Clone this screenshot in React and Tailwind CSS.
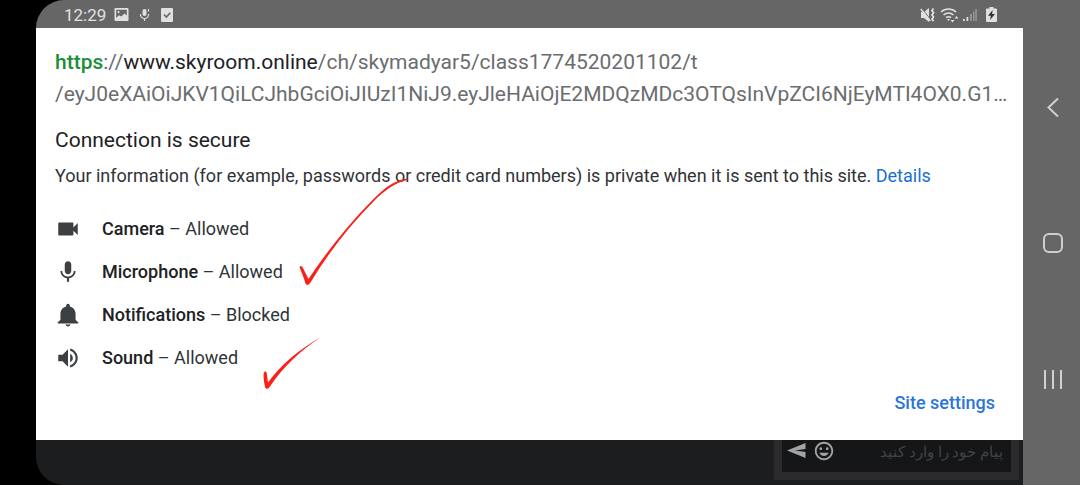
import {
  MdVideocam,
  MdMic,
  MdVolumeUp,
  MdTagFaces,
} from 'react-icons/md';

function BellIcon({ className }) {
  return (
    <svg className={className} viewBox="0 0 24 24" fill="currentColor">
      <path d="M12 22.500c1.300 0 2.200-.700 2.400-1.700H9.600c.2 1 1.100 1.700 2.400 1.700zM19 16.500V11c0-3.300-2-6-5.300-6.900V3.300a1.700 1.700 0 0 0-3.400 0v.8C7 5 5 7.700 5 11v5.500l-2.500 2.200v1.100h19v-1.100z" />
    </svg>
  );
}

const PERMISSIONS = [
  { name: 'Camera',        state: 'Allowed', Icon: MdVideocam },
  { name: 'Microphone',    state: 'Allowed', Icon: MdMic },
  { name: 'Notifications', state: 'Blocked', Icon: BellIcon },
  { name: 'Sound',         state: 'Allowed', Icon: MdVolumeUp },
];

function StatusBar() {
  return (
    <div className="flex h-7 items-center justify-between bg-[#666666] pl-7 pr-[26px] pt-px text-[#e0e0e0]">
      <div className="flex items-center">
        <span className="text-[17px] leading-5">12:29</span>
        <svg className="ml-2 h-[14px] w-[15px]" viewBox="0 0 14 14">
          <path fill="currentColor" fillRule="evenodd"
            d="M1 0h12a1 1 0 0 1 1 1v11a1 1 0 0 1-1 1H1a1 1 0 0 1-1-1V1a1 1 0 0 1 1-1zm.7 1.7v8.1l3-2.6 2 1.4 3.4-3 2.2 2V1.700zM4 3a1.100 1.100 0 1 1 0 2.200A1.100 1.100 0 0 1 4 3z" />
        </svg>
        <svg className="ml-[10px] h-[14px] w-[12px]" viewBox="0 0 12 14" fill="none" stroke="currentColor">
          <rect x="3.500" y="1" width="4" height="7" rx="2" fill="currentColor" stroke="none" />
          <path strokeWidth="1.200" d="M1.500 6v.500a4 4 0 0 0 8 0V6M5.500 10.500V13M9.500 1v2.500" />
        </svg>
        <svg className="ml-[10px] h-[14px] w-[12px]" viewBox="0 0 12 14">
          <rect width="12" height="14" rx="1" fill="currentColor" />
          <path d="M3 6.500l2.400 2.500L9.300 4.800" fill="none" stroke="#666666" strokeWidth="1.600" />
        </svg>
      </div>

      <div className="flex items-center">
        {/* Muted, vibrating */}
        <svg className="h-4 w-4" viewBox="0 0 16 16" fill="none" stroke="currentColor">
          <path fill="currentColor" stroke="none" d="M1 5h3l5-4v14l-5-4H1z" />
          <path stroke="#666666" strokeWidth="1" d="M2 1.500l8.500 11" />
          <path strokeWidth="1.400" d="M.800 2l9.500 12" />
          <path strokeWidth="1.800" d="M13.500 1.500l-1.500 2 1.500 2.200-1.500 2.200 1.500 2.200-1.500 2.200 1.500 2" />
        </svg>
        <svg className="ml-1 h-4 w-5" viewBox="0 0 20 16" fill="none" stroke="currentColor" strokeWidth="1.500">
          <path d="M1 5a11 11 0 0 1 15 0M3.500 8a7.500 7.500 0 0 1 10 0M6 10.700a4 4 0 0 1 5 0" />
          <path fill="currentColor" stroke="none" d="M7 12h3l-1.500 2zM10.500 13h4l-2 2.500zM14.500 11.500h4l-2-2.500z" />
        </svg>
        <svg className="ml-[3px] h-[14px] w-[14px]" viewBox="0 0 14 14" fill="currentColor">
          <path d="M0 11h1.800v2H0zM3.500 9h1.800v4H3.500z" />
          <path opacity=".4" d="M7 6h1.800v7H7zM10 3.500h1.500V13H10zM12.300 1h1.500v12h-1.500z" />
        </svg>
        <svg className="ml-[9px] h-4 w-[11px]" viewBox="0 0 11 16">
          <path fill="currentColor" d="M3.500 0h4v1.500H10a1 1 0 0 1 1 1V14a1 1 0 0 1-1 1H1a1 1 0 0 1-1-1V2.500a1 1 0 0 1 1-1h2.500z" />
          <path fill="#333333" d="M6.700 3L2 8.700h2.800L4 13l5-6H6.100z" />
        </svg>
      </div>
    </div>
  );
}

function PageInfo() {
  return (
    <main className="relative bg-white pb-[25px] pl-[19px] pr-3 pt-[18px] text-[#202124]">
      <div className="text-[21px] leading-8 text-[#6a6d70]">
        <p className="truncate">
          <span className="font-medium text-[#1a8f38]">https</span>://
          <span className="text-[#202124]">www.skyroom.online</span>
          /ch/skymadyar5/class1774520201102/t
        </p>
        <p className="truncate">
          /eyJ0eXAiOiJKV1QiLCJhbGciOiJIUzI1NiJ9.eyJleHAiOjE2MDQzMDc3OTQsInVpZCI6NjEyMTI4OX0.G1…
        </p>
      </div>

      <h1 className="mt-[14px] text-[21px] leading-8">Connection is secure</h1>
      <p className="mt-2 text-lg leading-6 text-[#303336]">
        Your information (for example, passwords or credit card numbers) is private when it is sent to this site.{' '}
        <a href="#details" className="text-[#1a6fd0]">Details</a>
      </p>

      <ul className="mt-[19px] flex flex-col">
        {PERMISSIONS.map(({ name, state, Icon }) => (
          <li key={name} className="flex h-[43px] items-center text-lg">
            <Icon className="h-[26px] w-[26px] shrink-0 text-[#3c4043]" />
            <span className="ml-[21px]">
              <span className="font-medium">{name}</span>
              <span className="text-[#303336]"> – {state}</span>
            </span>
          </li>
        ))}
      </ul>

      <div className="flex justify-end pr-4">
        <a href="#site-settings" className="mt-3 text-lg leading-6 font-medium text-[#2b74dc]">
          Site settings
        </a>
      </div>

      {/* Hand-drawn ticks */}
      <svg className="pointer-events-none absolute left-[224px] top-[146px] h-[220px] w-[152px]" viewBox="260 174 152 220" fill="#fb2018">
        <path d="M299.500 267c1-2 2.500-1 3.500 1l5.500 11c18-27 40-55 64-79 13-13 19-18 34-21.500 1 1 0 1.500-1 2-11 3-20 9-31 20-24 24-46 52-64 82-2 3-4 3-5 1-2-7-4-11-6-16.500z" />
        <path d="M263.700 373c.8-2 2.500-2 3 0l1.300 9.500c13-17.500 30-32.500 53-45.500-21 14-37 29-50 48-2 4-5 5-6 2-1-5-1.800-10-1.300-14z" />
      </svg>
    </main>
  );
}

function ChatBar() {
  return (
    <div className="flex min-h-[45px] flex-1 items-start justify-end bg-[#1c1d1f] pr-1">
      <form className="flex h-10 w-[245px] border-8 border-t-0 border-[#2b2b2d] bg-[#151617] text-[#a3a3a3]">
        <button type="button" aria-label="Send" className="ml-[5px] h-[22px] w-5">
          <svg viewBox="0 0 20 22" fill="currentColor">
            <path d="M0 10.500L18.500 3v6L8 10.500 18.500 12v6z" />
          </svg>
        </button>
        <button type="button" aria-label="Emoji" className="ml-[6px] h-[22px] w-[22px]">
          <MdTagFaces className="h-[22px] w-[22px]" />
        </button>
        <input
          dir="rtl"
          aria-label="پیام خود را وارد کنید"
          placeholder="پیام خود را وارد کنید"
          className="h-6 min-w-0 flex-1 bg-transparent pr-2 text-[15px] text-[#a3a3a3] outline-none placeholder:text-[#434345]"
        />
      </form>
    </div>
  );
}

function NavBar() {
  return (
    <nav className="flex w-[57px] shrink-0 flex-col items-center justify-center gap-[116px] bg-[#666666] pl-[3px] text-[#d0d0d0]">
      <button type="button" aria-label="Back" className="h-5 w-5">
        <svg viewBox="0 0 20 20" fill="none" stroke="currentColor" strokeWidth="2">
          <path d="M15 1.500L5.500 10.500l9.500 9" />
        </svg>
      </button>
      <button type="button" aria-label="Home" className="h-5 w-5">
        <svg viewBox="0 0 20 20" fill="none" stroke="currentColor" strokeWidth="2">
          <rect x="1" y="1" width="18" height="18" rx="5" />
        </svg>
      </button>
      <button type="button" aria-label="Recent apps" className="h-5 w-5">
        <svg viewBox="0 0 20 20" fill="none" stroke="currentColor" strokeWidth="2">
          <path d="M2 1v19M10 1v19M18 1v19" />
        </svg>
      </button>
    </nav>
  );
}

export default function App() {
  return (
    <div className="flex min-h-screen bg-black pl-9 font-[Roboto,sans-serif]">
      <div className="flex min-w-0 flex-1 flex-col overflow-hidden rounded-l-[28px]">
        <StatusBar />
        <PageInfo />
        <ChatBar />
      </div>
      <NavBar />
    </div>
  );
}
